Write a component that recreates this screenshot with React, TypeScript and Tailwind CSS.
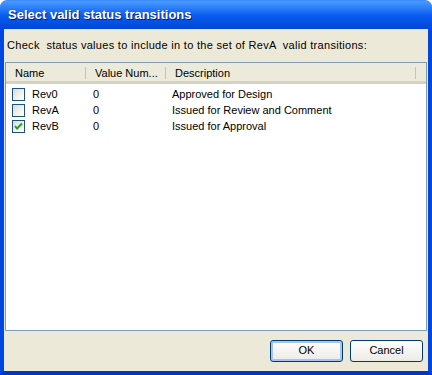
import React from "react";

const font = { fontFamily: "Tahoma, 'Liberation Sans', 'DejaVu Sans', sans-serif" };

function CheckBox({ checked }: { checked?: boolean }) {
  return (
    <div className="w-[13px] h-[13px] border border-[#1C5180] bg-gradient-to-br from-[#DCDCD7] via-[#F0F0EA] to-[#FFFFFF] flex items-center justify-center">
      {checked && (
        <svg width="9" height="9" viewBox="0 0 9 9">
          <path d="M1 4 L3 6.5 L8 1.5" stroke="#21A121" strokeWidth="2" fill="none" />
        </svg>
      )}
    </div>
  );
}

const rows = [
  { name: "Rev0", value: "0", desc: "Approved for Design", checked: false },
  { name: "RevA", value: "0", desc: "Issued for Review and Comment", checked: false },
  { name: "RevB", value: "0", desc: "Issued for Approval", checked: true },
];

export default function App() {
  return (
    <div className="w-[432px] h-[375px] flex flex-col text-[11px] text-black" style={font}>
      <div className="h-[29px] rounded-t-[7px] bg-gradient-to-b from-[#4A9BFF] via-[#0A5DF0] to-[#0046D6] flex items-center px-[8px] border-t border-[#3A8CFF]">
        <span
          className="text-white font-bold text-[13px]"
          style={{ fontFamily: "'Liberation Sans', Arial, sans-serif", textShadow: "1px 1px 0 #0A1882" }}
        >
          Select valid status transitions
        </span>
      </div>
      <div className="flex-1 flex flex-col bg-[#ECE9D8] border-x-4 border-b-4 border-x-[#0046E0] border-b-[#0036C0]">
        <div className="h-[33px] flex items-center pl-[3px] whitespace-pre tracking-[0.3px]">Check  status values to include in to the set of RevA  valid transitions:</div>
        <div className="mx-[1px] h-[269px] border border-[#7F9DB9] bg-white flex flex-col">
          <div className="h-[21px] flex bg-[#EBEADB] border-b-[3px] border-[#D6D2C2] pt-[2px]">
            <div className="w-[80px] flex items-center pl-[9px] relative">
              Name
              <div className="absolute right-[0px] top-[2px] w-[1px] h-[12px] bg-[#C7C5B2]" />
            </div>
            <div className="w-[80px] flex items-center pl-[9px] relative">
              Value Num...
              <div className="absolute right-[0px] top-[2px] w-[1px] h-[12px] bg-[#C7C5B2]" />
            </div>
            <div className="w-[250px] flex items-center pl-[9px] relative">
              Description
              <div className="absolute right-[0px] top-[2px] w-[1px] h-[12px] bg-[#C7C5B2]" />
            </div>
          </div>
          <div className="flex flex-col pt-[2px]">
            {rows.map((r) => (
              <div key={r.name} className="h-[16px] flex items-center">
                <div className="w-[80px] flex items-center pl-[6px] gap-[7px]">
                  <CheckBox checked={r.checked} />
                  <span>{r.name}</span>
                </div>
                <div className="w-[80px] pl-[7px]">{r.value}</div>
                <div className="pl-[6px]">{r.desc}</div>
              </div>
            ))}
          </div>
        </div>
        <div className="flex-1 flex items-center justify-end gap-[7px] pr-[5px] pb-[1px]">
          <button className="w-[73px] h-[22px] rounded-[3px] border border-[#003C74] bg-gradient-to-b from-[#FFFFFF] to-[#ECEBE6] shadow-[inset_0_0_0_2px_#A8C3F0] text-[11px]">
            OK
          </button>
          <button className="w-[73px] h-[22px] rounded-[3px] border border-[#003C74] bg-gradient-to-b from-[#FFFFFF] to-[#ECEBE6] text-[11px]">
            Cancel
          </button>
        </div>
      </div>
    </div>
  );
}
